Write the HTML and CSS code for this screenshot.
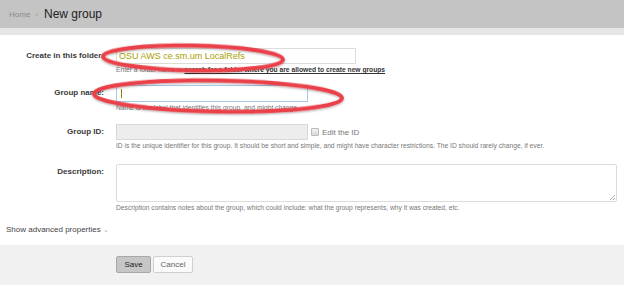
FILE: index.html
```html
<!DOCTYPE html>
<html lang="en">
<head>
  <meta charset="UTF-8">
  <title>New group</title>
  <link rel="stylesheet" href="styles.css">
</head>
<body>

  <div class="topbar">
    <span class="crumb">Home</span>
    <span class="sep">&rsaquo;</span>
    <span class="title">New group</span>
  </div>
  <div class="band"></div>

  <div class="form">
    <div class="field">
      <label>Create in this folder:</label>
      <div class="control">
        <div class="input folder">OSU AWS ce.sm.um LocalRefs</div>
        <div class="hint">Enter a folder name or <a href="#">search for a folder where you are allowed to create new groups</a></div>
      </div>
    </div>

    <div class="field name-field">
      <label>Group name:</label>
      <div class="control">
        <div class="input short focus"><span class="caret"></span></div>
        <div class="hint">Name is the label that identifies this group, and might change.</div>
      </div>
    </div>

    <div class="field id-field">
      <label>Group ID:</label>
      <div class="control">
        <div class="id-line">
          <div class="input short disabled"></div>
          <span class="check"></span>
          <span class="check-label">Edit the ID</span>
        </div>
        <div class="hint">ID is the unique identifier for this group. It should be short and simple, and might have character restrictions. The ID should rarely change, if ever.</div>
      </div>
    </div>

    <div class="field">
      <label>Description:</label>
      <div class="control">
        <div class="input area"><span class="grip"></span></div>
        <div class="hint">Description contains notes about the group, which could include: what the group represents, why it was created, etc.</div>
      </div>
    </div>

    <div class="advanced">Show advanced properties <span class="chev">&#8964;</span></div>
  </div>

  <div class="footer">
    <button class="btn save">Save</button>
    <button class="btn cancel">Cancel</button>
  </div>

  <!-- red annotation marks drawn over the form -->
  <svg class="marks" width="624" height="285" viewBox="0 0 624 285">
    <defs>
      <filter id="shadow" x="-10%" y="-30%" width="120%" height="160%">
        <feDropShadow dx="0" dy="1" stdDeviation="1" flood-color="#000" flood-opacity="0.35"/>
      </filter>
    </defs>
    <ellipse cx="193" cy="58" rx="90" ry="12.5" transform="rotate(1 193 58)" fill="none" stroke="#ea4148" stroke-width="4" filter="url(#shadow)"/>
    <ellipse cx="218" cy="96" rx="124" ry="15.5" transform="rotate(1 218 96)" fill="none" stroke="#ea4148" stroke-width="4" filter="url(#shadow)"/>
  </svg>

</body>
</html>
```

FILE: styles.css
```css
body {
  margin: 0;
  font-family: 'Liberation Sans', Arial, sans-serif;
  background-color: #ffffff;
  color: #333;
  position: relative;
  width: 624px;
  height: 285px;
  overflow: hidden;
}
.topbar {
  height: 28px;
  background-color: #c4c4c4;
  display: flex;
  align-items: center;
  padding-left: 9px;
  box-shadow: 0 1px 1px rgba(0, 0, 0, 0.12);
}
.crumb {
  font-size: 8px;
  color: #8a8a8a;
}
.sep {
  font-size: 8px;
  color: #999;
  margin: 0 6px 0 5px;
}
.title {
  font-size: 12px;
  color: #222;
}
.band {
  height: 7px;
  background-color: #e6e6e6;
}
.form {
  padding-top: 13px;
}
.field {
  display: grid;
  grid-template-columns: 104px 1fr;
  column-gap: 12px;
  margin-bottom: 11px;
}
.name-field {
  margin-bottom: 12px;
}
.id-field {
  margin-bottom: 14px;
}
.field label {
  text-align: right;
  font-size: 8px;
  font-weight: bold;
  line-height: 16px;
  color: #3a3a3a;
}
.input {
  box-sizing: border-box;
  height: 16px;
  border: 1px solid #dcdcdc;
  background-color: #fff;
  font-size: 8px;
  line-height: 14px;
  padding-left: 2px;
}
.folder {
  width: 240px;
  font-size: 9px;
  color: #a8a000;
}
.short {
  width: 192px;
}
.focus {
  height: 17px;
  border-color: #a9c9ea;
  display: flex;
  align-items: center;
  padding-left: 4px;
}
.caret {
  width: 1px;
  height: 9px;
  background-color: #8a8400;
}
.disabled {
  background-color: #ededed;
  border-color: #d8d8d8;
}
.area {
  width: 501px;
  height: 38px;
  border-radius: 2px;
  position: relative;
}
.grip {
  position: absolute;
  right: 1px;
  bottom: 1px;
  width: 5px;
  height: 5px;
  background: linear-gradient(135deg, transparent 45%, #aaa 45%, #aaa 55%, transparent 55%, transparent 75%, #aaa 75%, #aaa 85%, transparent 85%);
}
.hint {
  font-size: 6.7px;
  line-height: 8px;
  margin-top: 2px;
  color: #777;
  white-space: nowrap;
}
.hint a {
  color: #333;
  font-weight: bold;
  text-decoration: underline;
}
.id-line {
  display: flex;
  align-items: center;
}
.check {
  width: 6px;
  height: 6px;
  margin-left: 3px;
  border: 1px solid #bbb;
  border-radius: 1px;
  background: linear-gradient(#f4f4f4, #d8d8d8);
}
.check-label {
  font-size: 8px;
  color: #777;
  margin-left: 3px;
}
.advanced {
  font-size: 8px;
  color: #444;
  padding-left: 6px;
  line-height: 8px;
  margin-top: 14px;
}
.chev {
  color: #aaa;
  font-size: 7px;
}
.footer {
  position: absolute;
  left: 0;
  right: 0;
  top: 245px;
  bottom: 0;
  background-color: #f1f1f1;
  padding: 11px 0 0 116px;
  display: flex;
  align-items: flex-start;
  gap: 2px;
}
.btn {
  height: 17px;
  font-family: 'Liberation Sans', Arial, sans-serif;
  font-size: 8px;
  border-radius: 2px;
  padding: 0;
}
.save {
  width: 35px;
  background-color: #c6c6c6;
  border: 1px solid #a8a8a8;
  color: #222;
}
.cancel {
  width: 40px;
  background-color: #fafafa;
  border: 1px solid #cfcfcf;
  color: #666;
}
.marks {
  position: absolute;
  left: 0;
  top: 0;
  pointer-events: none;
}
```
